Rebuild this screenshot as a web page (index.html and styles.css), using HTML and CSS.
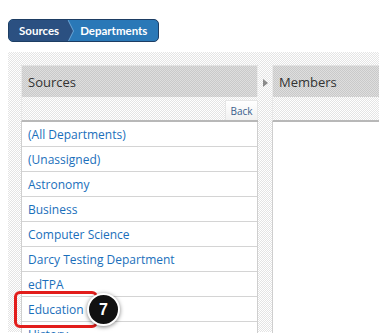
FILE: index.html
```html
<!DOCTYPE html>
<html lang="en">
<head>
    <meta charset="UTF-8">
    <meta name="viewport" content="width=device-width, initial-scale=1.0">
    <title>Departments</title>
    <link rel="stylesheet" href="styles.css">
</head>
<body>
    <nav class="crumbs">
        <span class="crumb first">Sources</span>
        <span class="crumb current">Departments</span>
    </nav>

    <div class="browser">
        <section class="pane">
            <h2 class="pane-title">Sources</h2>
            <div class="toolbar"><button class="back">Back</button></div>
            <ul class="list">
                <li><a href="#">(All Departments)</a></li>
                <li><a href="#">(Unassigned)</a></li>
                <li><a href="#">Astronomy</a></li>
                <li><a href="#">Business</a></li>
                <li><a href="#">Computer Science</a></li>
                <li><a href="#">Darcy Testing Department</a></li>
                <li><a href="#">edTPA</a></li>
                <li class="marked">
                    <a href="#">Education</a>
                    <span class="highlight"></span>
                    <span class="step">7</span>
                </li>
                <li><a href="#">History</a></li>
            </ul>
        </section>

        <div class="gutter"><span class="arrow"></span></div>

        <section class="pane members">
            <h2 class="pane-title">Members</h2>
            <div class="toolbar"></div>
            <div class="pane-body"></div>
        </section>
    </div>
</body>
</html>
```

FILE: styles.css
```css
* {
    margin: 0;
    padding: 0;
    box-sizing: border-box;
}

body {
    background-color: #fff;
    font-family: "Open Sans", "Liberation Sans", sans-serif;
    overflow: hidden;
    height: 333px;
}

.crumbs {
    display: inline-flex;
    margin: 19px 0 0 8px;
    height: 23px;
    border: 1px solid #1d3d63;
    border-radius: 5px;
    overflow: hidden;
    background-color: #2a78b7;
}

.crumb {
    display: flex;
    align-items: center;
    color: #fff;
    font-family: Lato, "Liberation Sans", sans-serif;
    font-size: 11.5px;
    font-weight: bold;
}

.crumb.first {
    position: relative;
    background-color: #2b5081;
    padding: 0 8px 0 10px;
}

.crumb.first::after {
    content: "";
    position: absolute;
    right: -6px;
    top: -1px;
    width: 0;
    height: 0;
    border-top: 12px solid transparent;
    border-bottom: 12px solid transparent;
    border-left: 6px solid #2b5081;
    filter: drop-shadow(1px 0 0 #6aa3d4);
}

.crumb.current {
    padding: 0 11px 0 13px;
}

.browser {
    margin: 10px 0 0 8px;
    padding: 13px 0 0 13px;
    height: 280px;
    display: grid;
    grid-template-columns: 237px 14px 1fr;
    background-color: #fff;
    background-image: repeating-conic-gradient(#e4e4e4 0 25%, #fff 0 50%);
    background-size: 2px 2px;
}

.pane {
    display: flex;
    flex-direction: column;
    border-top: 1px solid #e2e2e2;
}

.pane-title {
    height: 31px;
    display: flex;
    align-items: center;
    padding-left: 6px;
    font-size: 13px;
    font-weight: normal;
    color: #333;
    background-image: repeating-conic-gradient(#c9c9c9 0 25%, #dedede 0 50%);
    background-size: 2px 2px;
    border-left: 1px solid #e8e8e8;
    border-right: 1px solid #e8e8e8;
}

.toolbar {
    height: 25px;
    display: flex;
    justify-content: flex-end;
    align-items: flex-end;
    border-left: 1px solid #e8e8e8;
    border-bottom: 2px solid #b8b8b8;
}

.back {
    width: 33px;
    height: 20px;
    border: 1px solid #e6e6e6;
    border-bottom: 0;
    background: linear-gradient(#fff, #f1f1f1);
    color: #3a5e8c;
    font-family: "Open Sans", "Liberation Sans", sans-serif;
    font-size: 10px;
}

.list {
    list-style: none;
    background-color: #fff;
    border-left: 1px solid #cfcfcf;
    border-right: 1px solid #cfcfcf;
}

.list li {
    position: relative;
    height: 25px;
    display: flex;
    align-items: center;
    padding-left: 6px;
    border-bottom: 1px solid #d4d4d4;
}

.list a {
    color: #1a6fbb;
    font-size: 12px;
    text-decoration: none;
}

.highlight {
    position: absolute;
    left: -8px;
    top: -6px;
    width: 84px;
    height: 37px;
    border: 3px solid #e21d1b;
    border-radius: 6px;
}

.step {
    position: absolute;
    left: 65px;
    top: -4px;
    width: 33px;
    height: 33px;
    border-radius: 50%;
    background-color: #111;
    border: 2px solid #fff;
    box-shadow: 0 1px 4px rgba(0, 0, 0, 0.5);
    color: #fff;
    font-family: "Liberation Sans", sans-serif;
    font-weight: bold;
    font-size: 16px;
    display: flex;
    align-items: center;
    justify-content: center;
}

.gutter {
    position: relative;
}

.arrow {
    position: absolute;
    left: 5px;
    top: 14px;
    width: 0;
    height: 0;
    border-top: 4px solid transparent;
    border-bottom: 4px solid transparent;
    border-left: 5px solid #8a8a8a;
}

.members .pane-title {
    border-right: 0;
}

.members .toolbar {
    border-left: 1px solid #e8e8e8;
}

.pane-body {
    flex: 1;
    background-color: #fff;
    border-left: 1px solid #cfcfcf;
}
```
